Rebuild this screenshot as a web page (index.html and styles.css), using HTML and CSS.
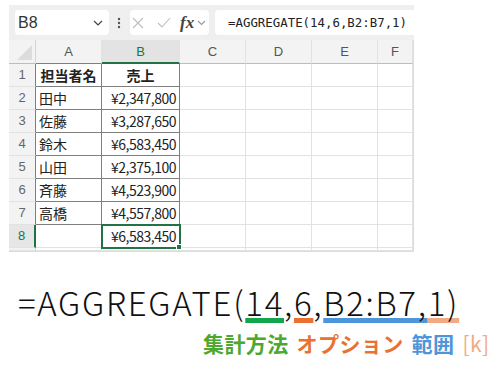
FILE: index.html
```html
<!DOCTYPE html>
<html lang="ja">
<head>
  <meta charset="UTF-8" />
  <title>AGGREGATE</title>
  <link rel="stylesheet" href="styles.css">
</head>
<body>
  <div class="sheet">
    <div class="toolbar">
      <div class="namebox">
        <span>B8</span>
        <svg class="chev" width="10" height="6" viewBox="0 0 10 6"><path d="M1 1l4 4 4-4" fill="none" stroke="#444" stroke-width="1.2"/></svg>
      </div>
      <svg class="dots" width="4" height="12" viewBox="0 0 4 12"><circle cx="2" cy="2" r="1.2" fill="#555"/><circle cx="2" cy="6" r="1.2" fill="#555"/><circle cx="2" cy="10" r="1.2" fill="#555"/></svg>
      <div class="fnbox">
        <svg width="12" height="12" viewBox="0 0 12 12"><path d="M1 1l10 10M11 1L1 11" stroke="#bdbdbd" stroke-width="1.1"/></svg>
        <svg width="14" height="11" viewBox="0 0 14 11"><path d="M1 6l4 4 8-9" fill="none" stroke="#bdbdbd" stroke-width="1.1"/></svg>
        <span class="fx">fx</span>
        <svg width="9" height="6" viewBox="0 0 9 6"><path d="M1 1l3.5 3.5L8 1" fill="none" stroke="#999" stroke-width="1.1"/></svg>
      </div>
      <div class="formula">=AGGREGATE(14,6,B2:B7,1)</div>
    </div>
    <div class="grid">
      <div class="corner"><span class="tri"></span></div>
      <div class="ch top">A</div>
      <div class="ch sel">B</div>
      <div class="ch">C</div>
      <div class="ch">D</div>
      <div class="ch">E</div>
      <div class="ch">F</div>

      <div class="rh tbl">1</div>
      <div class="c t hd">担当者名</div>
      <div class="c t hd">売上</div>
      <div class="c"></div><div class="c"></div><div class="c"></div><div class="c"></div>

      <div class="rh tbl">2</div>
      <div class="c t">田中</div>
      <div class="c t num">¥2,347,800</div>
      <div class="c"></div><div class="c"></div><div class="c"></div><div class="c"></div>

      <div class="rh tbl">3</div>
      <div class="c t">佐藤</div>
      <div class="c t num">¥3,287,650</div>
      <div class="c"></div><div class="c"></div><div class="c"></div><div class="c"></div>

      <div class="rh tbl">4</div>
      <div class="c t">鈴木</div>
      <div class="c t num">¥6,583,450</div>
      <div class="c"></div><div class="c"></div><div class="c"></div><div class="c"></div>

      <div class="rh tbl">5</div>
      <div class="c t">山田</div>
      <div class="c t num">¥2,375,100</div>
      <div class="c"></div><div class="c"></div><div class="c"></div><div class="c"></div>

      <div class="rh tbl">6</div>
      <div class="c t">斉藤</div>
      <div class="c t num">¥4,523,900</div>
      <div class="c"></div><div class="c"></div><div class="c"></div><div class="c"></div>

      <div class="rh tbl">7</div>
      <div class="c t">高橋</div>
      <div class="c t num">¥4,557,800</div>
      <div class="c"></div><div class="c"></div><div class="c"></div><div class="c"></div>

      <div class="rh sel">8</div>
      <div class="c"></div>
      <div class="c num active">¥6,583,450</div>
      <div class="c"></div><div class="c"></div><div class="c"></div><div class="c"></div>

      <div class="rh"></div>
      <div class="c"></div><div class="c"></div><div class="c"></div><div class="c"></div><div class="c"></div><div class="c"></div>
    </div>
  </div>

  <div class="expr">=AGGREGATE(<span class="u green">14</span>,<span class="u orange">6</span>,<span class="u blue">B2:B7,</span><span class="u peach">1)</span></div>

  <div class="labels">
    <span class="lbl-green">集計方法</span>
    <span class="lbl-orange">オプション</span>
    <span class="lbl-blue">範囲</span>
    <span class="lbl-peach">[k]</span>
  </div>
</body>
</html>
```

FILE: styles.css
```css
body {
  margin: 0;
  background: #ffffff;
  font-family: "Noto Sans CJK JP", "Noto Sans", sans-serif;
  color: #222;
}
.sheet {
  margin: 5px 0 0 9px;
  width: 405px;
}
.toolbar {
  height: 35px;
  background: #efefef;
  display: flex;
  align-items: center;
  padding-left: 6px;
}
.namebox {
  width: 94px;
  height: 25px;
  background: #fff;
  border-radius: 4px;
  display: flex;
  align-items: center;
  justify-content: space-between;
  padding: 0 6px 0 3px;
  box-sizing: border-box;
  font-family: "Liberation Sans", sans-serif;
  font-size: 16px;
  color: #333;
}
.dots {
  margin: 0 9px 0 8px;
}
.fnbox {
  width: 79px;
  height: 25px;
  background: #fff;
  border-radius: 4px;
  display: flex;
  align-items: center;
  padding-left: 2px;
  box-sizing: border-box;
}
.fnbox svg:nth-child(1) { margin-right: 13px; }
.fnbox svg:nth-child(2) { margin-right: 9px; }
.fx {
  font-family: "Liberation Serif", serif;
  font-style: italic;
  font-weight: 700;
  font-size: 17px;
  color: #444;
  margin-right: 3px;
  line-height: 1;
}
.formula {
  flex: 1;
  height: 25px;
  margin-left: 6px;
  background: #fff;
  border-radius: 4px 0 0 4px;
  padding-left: 13px;
  font-family: "DejaVu Sans Mono", monospace;
  font-size: 12.4px;
  line-height: 25px;
  color: #222;
}
.grid {
  display: grid;
  grid-template-columns: 27px 66px 78px 66px 66px 66px 35px;
  grid-template-rows: 24px repeat(8, 23px) 3px;
  border-right: 1px solid #dcdcdc;
  border-bottom: 1px solid #dcdcdc;
}
.grid > div {
  box-sizing: border-box;
}
.corner {
  background: #f3f3f3;
  border-right: 1px solid #d6d6d6;
  border-bottom: 1px solid #bdbdbd;
  position: relative;
}
.tri {
  position: absolute;
  right: 3px;
  bottom: 3px;
  width: 0;
  height: 0;
  border-left: 15px solid transparent;
  border-bottom: 15px solid #dcdcdc;
}
.ch {
  background: #f3f3f3;
  border-right: 1px solid #e2e2e2;
  border-bottom: 1px solid #bdbdbd;
  font-family: "Liberation Sans", sans-serif;
  font-size: 13px;
  color: #555;
  text-align: center;
  line-height: 23px;
}
.ch.top {
  border-bottom-color: #7f7f7f;
}
.ch.sel {
  background: #e3e3e3;
  color: #217346;
  border-bottom: 2px solid #217346;
}
.rh {
  background: #f3f3f3;
  border-right: 1px solid #d6d6d6;
  border-bottom: 1px solid #e2e2e2;
  font-family: "Liberation Sans", sans-serif;
  font-size: 13px;
  color: #666;
  text-align: center;
  line-height: 22px;
}
.rh.tbl {
  border-right-color: #7f7f7f;
}
.rh.sel {
  background: #e6e6e6;
  color: #217346;
  border-right: 2px solid #217346;
}
.c {
  border-right: 1px solid #e2e2e2;
  border-bottom: 1px solid #e2e2e2;
  font-size: 14px;
  line-height: 22px;
  padding: 0 3px;
  white-space: nowrap;
}
.c.t {
  border-right-color: #7f7f7f;
  border-bottom-color: #7f7f7f;
}
.c.hd {
  font-weight: 700;
  text-align: center;
}
.c.num {
  text-align: right;
  letter-spacing: -0.5px;
}
.c.active {
  position: relative;
  outline: 2px solid #217346;
  outline-offset: -1px;
}
.c.active::after {
  content: "";
  position: absolute;
  right: -3px;
  bottom: -3px;
  width: 4px;
  height: 4px;
  background: #217346;
  border: 1px solid #fff;
}
.expr {
  margin: 30px 0 0 18px;
  font-size: 33px;
  font-weight: 300;
  letter-spacing: 1.7px;
  line-height: 40px;
  color: #111;
  white-space: nowrap;
}
.u {
  text-decoration: underline;
  text-decoration-thickness: 5px;
  text-underline-offset: 2px;
  text-decoration-skip-ink: none;
}
.u.green { text-decoration-color: #12a54b; }
.u.orange { text-decoration-color: #e97132; }
.u.blue { text-decoration-color: #4e95d9; }
.u.peach { text-decoration-color: #f2aa84; }
.labels {
  display: flex;
  gap: 8px;
  margin: 8px 0 0 203px;
  font-size: 21px;
  font-weight: 700;
  letter-spacing: 0.4px;
  line-height: 26px;
  white-space: nowrap;
}
.lbl-green { color: #4ea72e; }
.lbl-orange { color: #e97132; }
.lbl-blue { color: #4e95d9; }
.lbl-peach { color: #f2aa84; font-weight: 400; }
```
